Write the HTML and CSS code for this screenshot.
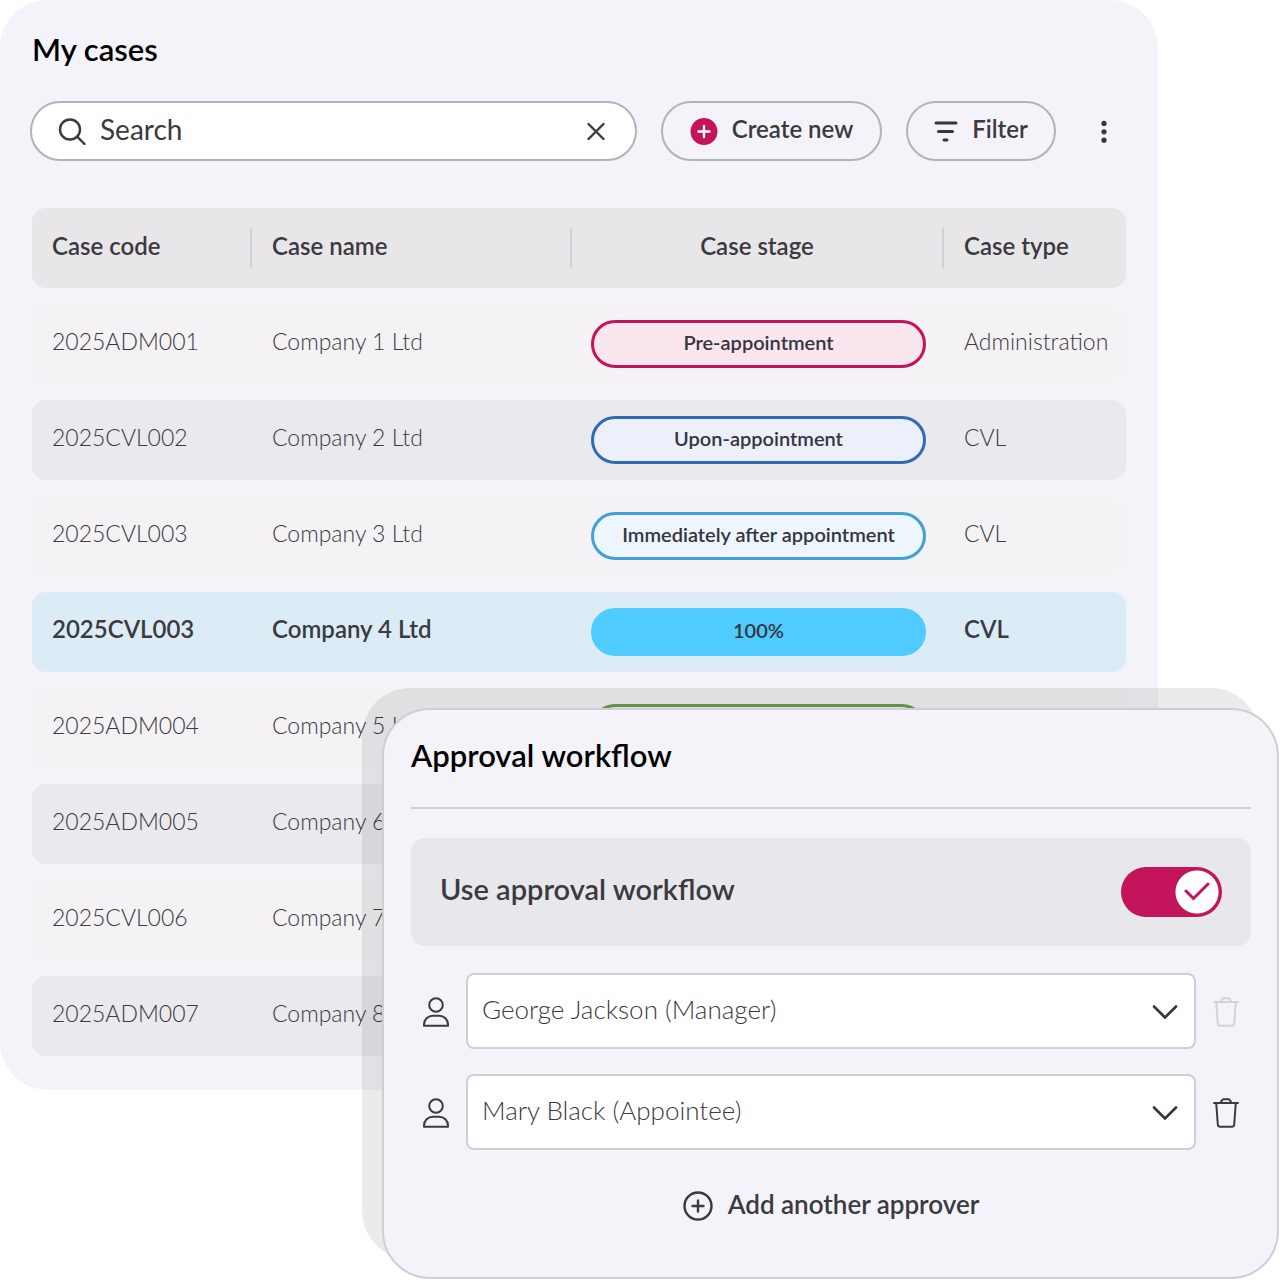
FILE: index.html
```
<!DOCTYPE html>
<html lang="en">
<head>
<meta charset="UTF-8">
<meta name="viewport" content="width=device-width, initial-scale=1.0">
<title>My cases</title>
<link rel="stylesheet" href="styles.css">
</head>
<body>
<div class="page">

    <!-- Case list -->
    <main class="cases">
        <h1>My cases</h1>

        <div class="toolbar">
            <div class="search">
                <svg width="28" height="28" viewBox="0 0 28 28" aria-hidden="true">
                    <circle cx="12" cy="12.5" r="10"/>
                    <path d="M19.2 19.7L26.5 27"/>
                </svg>
                <input type="text" placeholder="Search" aria-label="Search">
                <button type="button" aria-label="Clear search">
                    <svg width="18" height="18" viewBox="0 0 18 18" aria-hidden="true"><path d="M1.5 2L16.5 17M16.5 2L1.5 17"/></svg>
                </button>
            </div>
            <button type="button" class="pill-button create">
                <svg width="28" height="28" viewBox="0 0 28 28" aria-hidden="true">
                    <circle cx="14" cy="14.5" r="13.5" fill="#c3145c"/>
                    <path d="M14 9V20M8.5 14.5H19.5" stroke="#fff" stroke-width="2.4" stroke-linecap="round"/>
                </svg>
                <span>Create new</span>
            </button>
            <button type="button" class="pill-button filter">
                <svg width="24" height="24" viewBox="0 0 24 24" aria-hidden="true">
                    <path d="M2 4H22M4.5 12.5H18.5M10 21H13" fill="none" stroke="#36363b" stroke-width="3" stroke-linecap="round"/>
                </svg>
                <span>Filter</span>
            </button>
            <button type="button" class="more" aria-label="More options">
                <svg width="6" height="24" viewBox="0 0 6 24" aria-hidden="true">
                    <circle cx="3" cy="4.4" r="2.6"/><circle cx="3" cy="12.8" r="2.6"/><circle cx="3" cy="21.2" r="2.6"/>
                </svg>
            </button>
        </div>

        <table>
            <colgroup>
                <col class="col-code">
                <col class="col-name">
                <col>
                <col class="col-type">
            </colgroup>
            <thead>
                <tr>
                    <th><span>Case code</span></th>
                    <th><span>Case name</span></th>
                    <th class="center"><span>Case stage</span></th>
                    <th><span>Case type</span></th>
                </tr>
            </thead>
            <tbody>
                <tr>
                    <td>2025ADM001</td>
                    <td>Company 1 Ltd</td>
                    <td><div class="stage pre">Pre-appointment</div></td>
                    <td>Administration</td>
                </tr>
                <tr>
                    <td>2025CVL002</td>
                    <td>Company 2 Ltd</td>
                    <td><div class="stage upon">Upon-appointment</div></td>
                    <td>CVL</td>
                </tr>
                <tr>
                    <td>2025CVL003</td>
                    <td>Company 3 Ltd</td>
                    <td><div class="stage after">Immediately after appointment</div></td>
                    <td>CVL</td>
                </tr>
                <tr class="selected">
                    <td>2025CVL003</td>
                    <td>Company 4 Ltd</td>
                    <td><div class="stage full">100%</div></td>
                    <td>CVL</td>
                </tr>
                <tr>
                    <td>2025ADM004</td>
                    <td>Company 5 Ltd</td>
                    <td><div class="stage done"></div></td>
                    <td></td>
                </tr>
                <tr>
                    <td>2025ADM005</td>
                    <td>Company 6</td>
                    <td></td>
                    <td></td>
                </tr>
                <tr>
                    <td>2025CVL006</td>
                    <td>Company 7</td>
                    <td></td>
                    <td></td>
                </tr>
                <tr>
                    <td>2025ADM007</td>
                    <td>Company 8</td>
                    <td></td>
                    <td></td>
                </tr>
            </tbody>
        </table>
    </main>

    <!-- Approval workflow panel -->
    <section class="workflow">
        <h2>Approval workflow</h2>

        <div class="toggle-row">
            <label for="useWorkflow">Use approval workflow</label>
            <div class="toggle">
                <input type="checkbox" id="useWorkflow" checked>
                <svg width="26" height="20" viewBox="0 0 26 20" aria-hidden="true"><path d="M2 9L9.5 16.5L24 2"/></svg>
            </div>
        </div>

        <div class="approver">
            <svg class="person" width="26" height="32" viewBox="0 0 26 32" aria-hidden="true">
                <circle cx="13" cy="10" r="6.8"/>
                <path d="M1 30.8V29.5C1 24.5 5 20.8 10 20.8H16C21 20.8 25 24.5 25 29.5V30.8Z"/>
            </svg>
            <div class="select">
                <select aria-label="First approver">
                    <option>George Jackson (Manager)</option>
                </select>
                <svg width="26" height="15" viewBox="0 0 26 15" aria-hidden="true"><path d="M2 2.5L13 13.5L24 2.5"/></svg>
            </div>
            <button type="button" class="trash" aria-label="Remove first approver" disabled>
                <svg width="26" height="32" viewBox="0 0 26 32" aria-hidden="true">
                    <path d="M1 7H25M7.5 7L9 4.2Q9.5 3.2 10.5 3.2H15.5Q16.5 3.2 17 4.2L18.5 7M3.2 7L4.8 28.5Q5 30.8 7.2 30.8H18.8Q21 30.8 21.2 28.5L22.8 7"/>
                </svg>
            </button>
        </div>

        <div class="approver">
            <svg class="person" width="26" height="32" viewBox="0 0 26 32" aria-hidden="true">
                <circle cx="13" cy="10" r="6.8"/>
                <path d="M1 30.8V29.5C1 24.5 5 20.8 10 20.8H16C21 20.8 25 24.5 25 29.5V30.8Z"/>
            </svg>
            <div class="select">
                <select aria-label="Second approver">
                    <option>Mary Black (Appointee)</option>
                </select>
                <svg width="26" height="15" viewBox="0 0 26 15" aria-hidden="true"><path d="M2 2.5L13 13.5L24 2.5"/></svg>
            </div>
            <button type="button" class="trash" aria-label="Remove second approver">
                <svg width="26" height="32" viewBox="0 0 26 32" aria-hidden="true">
                    <path d="M1 7H25M7.5 7L9 4.2Q9.5 3.2 10.5 3.2H15.5Q16.5 3.2 17 4.2L18.5 7M3.2 7L4.8 28.5Q5 30.8 7.2 30.8H18.8Q21 30.8 21.2 28.5L22.8 7"/>
                </svg>
            </button>
        </div>

        <button type="button" class="add">
            <svg width="30" height="30" viewBox="0 0 30 30" aria-hidden="true">
                <circle cx="15" cy="15" r="13.5"/>
                <path d="M15 9.5V20.5M9.5 15H20.5"/>
            </svg>
            <span>Add another approver</span>
        </button>
    </section>

</div>
</body>
</html>
```
FILE: styles.css
```
* {
    box-sizing: border-box;
}

body {
    margin: 0;
    background-color: #fff;
    color: #3a3a3f;
    font-family: Lato, "Open Sans", sans-serif;
    font-size: 24px;
    line-height: 28px;
}

button,
input,
select {
    font: inherit;
    color: inherit;
}

button {
    padding: 0;
    border: none;
    background: none;
    cursor: pointer;
}

svg {
    display: block;
    flex-shrink: 0;
}

/* both panels share one grid cell so the workflow overlaps the list */
.page {
    display: grid;
    grid-template-columns: minmax(0, 1fr);
}

.cases,
.workflow {
    grid-area: 1 / 1;
    align-self: start;
    background-color: #f4f3f9;
}

.cases {
    margin-right: 122px;
    padding: 31px 30px 18px;
    border-radius: 48px;
}

h1,
h2 {
    margin: 0;
    color: #000;
    font-size: 31px;
    line-height: 36px;
    font-weight: 600;
}

h1 {
    padding-left: 2px;
}

/* Toolbar */
.toolbar {
    display: flex;
    align-items: center;
    gap: 24px;
    margin: 34px 0 31px;
}

.search {
    display: flex;
    align-items: center;
    flex: 1;
    min-width: 0;
    height: 60px;
    padding: 0 30px 0 26px;
    border: 2px solid #b3b2b7;
    border-radius: 30px;
    background-color: #fff;
}

.search svg {
    fill: none;
    stroke: #3a3a3f;
    stroke-width: 2.4;
    stroke-linecap: round;
}

.search input {
    flex: 1;
    min-width: 0;
    padding: 0 14px 4px;
    border: none;
    outline: none;
    background: none;
    font-size: 28px;
    line-height: 36px;
}

.search input::placeholder {
    color: #3a3a3f;
    opacity: 1;
}

.pill-button {
    display: flex;
    align-items: center;
    justify-content: center;
    gap: 14px;
    height: 60px;
    border: 2px solid #b3b2b7;
    border-radius: 30px;
    font-weight: 600;
}

.pill-button span,
.add span {
    padding-bottom: 4px;
}

.create {
    width: 221px;
}

.filter {
    width: 150px;
}

.more {
    display: flex;
    align-items: center;
    justify-content: center;
    width: 48px;
    height: 48px;
    fill: #36363b;
}

/* Table */
table {
    width: calc(100% - 4px);
    margin: 0 2px;
    table-layout: fixed;
    border-collapse: separate;
    border-spacing: 0 16px;
}

.col-code {
    width: 220px;
}

.col-name {
    width: 320px;
}

.col-type {
    width: 182px;
}

th,
td {
    height: 80px;
    text-align: left;
    white-space: nowrap;
}

th {
    padding: 0;
    background-color: #e8e6e9;
    font-weight: 600;
}

th span {
    display: block;
    padding: 4px 20px 8px;
    border-right: 2px solid #d3d1d5;
}

th:last-child span {
    border-right: none;
}

.center {
    text-align: center;
}

td {
    padding: 0 0 6px 20px;
    background-color: #f4f2f5;
    font-size: 23px;
    font-weight: 300;
}

td:nth-child(3) {
    padding: 0 18px 0 19px;
}

tr:nth-child(even) td {
    background-color: #eae9ee;
}

tr.selected td {
    background-color: #dcecf7;
    font-size: 24px;
    font-weight: 600;
}

th:first-child,
td:first-child {
    border-radius: 14px 0 0 14px;
}

th:last-child,
td:last-child {
    border-radius: 0 14px 14px 0;
}

.stage {
    height: 48px;
    border: 3px solid;
    border-radius: 24px;
    color: #33363f;
    font-size: 20px;
    line-height: 38px;
    font-weight: 600;
    text-align: center;
}

.pre {
    border-color: #c3145c;
    background-color: #fae6ee;
}

.upon {
    border-color: #2e6db5;
    background-color: #edf0fa;
}

.after {
    border-color: #3fa2d4;
    background-color: #eef5fd;
}

.full {
    border-color: #50cbff;
    background-color: #50cbff;
}

.done {
    border-color: #6a9f49;
    background-color: #eef6ea;
}

/* Approval workflow */
.workflow {
    margin: 708px 1px 1px 382px;
    padding: 27px 26px 55px 27px;
    border: 2px solid #cfced4;
    border-radius: 48px;
    box-shadow: -20px -20px 0 rgba(0, 0, 0, 0.08);
}

h2 {
    padding-bottom: 34px;
    border-bottom: 2px solid #cfced4;
}

.toggle-row {
    display: flex;
    align-items: center;
    justify-content: space-between;
    height: 108px;
    margin: 29px 0 27px;
    padding: 0 29px;
    border-radius: 14px;
    background-color: #e8e7eb;
}

.toggle-row label {
    padding-bottom: 6px;
    font-size: 29px;
    font-weight: 600;
}

.toggle {
    display: grid;
    align-items: center;
    justify-items: end;
}

.toggle input,
.toggle svg {
    grid-area: 1 / 1;
}

.toggle input {
    appearance: none;
    width: 101px;
    height: 50px;
    margin: 0;
    border-radius: 25px;
    background: radial-gradient(circle at 76px 25px, #fff 21px, #c3145c 22px);
    cursor: pointer;
}

.toggle svg {
    margin-right: 12px;
    fill: none;
    stroke: #c3145c;
    stroke-width: 3;
    stroke-linecap: round;
    pointer-events: none;
}

.approver {
    display: flex;
    align-items: center;
    gap: 17px;
    margin-bottom: 25px;
    padding: 0 12px;
}

.person,
.trash svg,
.add svg {
    fill: none;
    stroke: #3a3a3f;
    stroke-width: 2;
    stroke-linejoin: round;
    stroke-linecap: round;
}

.select {
    display: grid;
    flex: 1;
    align-items: center;
    justify-items: end;
}

.select select,
.select svg {
    grid-area: 1 / 1;
}

.select select {
    appearance: none;
    width: 100%;
    height: 76px;
    padding: 0 56px 4px 14px;
    border: 2px solid #cfced4;
    border-radius: 8px;
    background-color: #fff;
    font-size: 26px;
    line-height: 36px;
    font-weight: 300;
}

.select svg {
    margin-right: 18px;
    fill: none;
    stroke: #36363b;
    stroke-width: 2.6;
    stroke-linecap: round;
    pointer-events: none;
}

.trash:disabled svg {
    stroke: #d3d2d7;
}

.add {
    display: flex;
    align-items: center;
    gap: 15px;
    margin: 40px auto 0;
    font-size: 26px;
    font-weight: 600;
}

.add svg {
    stroke-width: 2.4;
}
```
